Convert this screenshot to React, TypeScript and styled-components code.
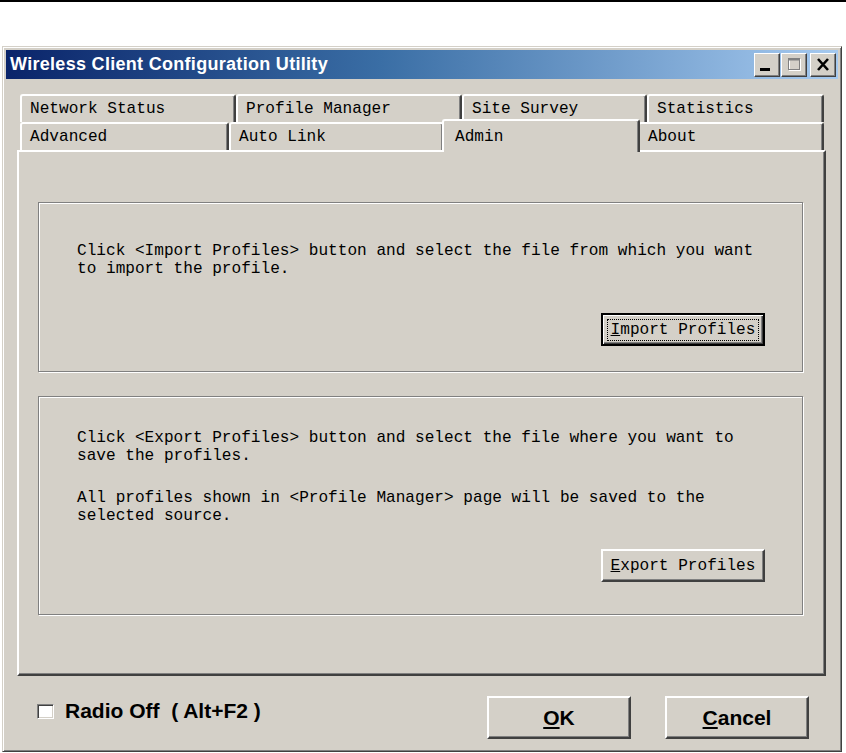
import React from "react";
import styled, { createGlobalStyle, css } from "styled-components";

const mono = `"Liberation Mono", "DejaVu Sans Mono", monospace`;
const sans = `"Liberation Sans", Arial, sans-serif`;

const GlobalStyle = createGlobalStyle`
  html, body { margin: 0; padding: 0; background: #ffffff; }
  #root { width: 846px; height: 753px; overflow: hidden; }
`;

const Page = styled.div`
  width: 846px;
  height: 753px;
  overflow: hidden;
  background: #ffffff;
`;

const TopRule = styled.div`
  height: 2px;
  background: #000;
`;

const Window = styled.div`
  margin: 44px 0 0 2px;
  width: 840px;
  box-sizing: border-box;
  background: #d4d0c8;
  border: 1px solid;
  border-color: #d4d0c8 #404040 #404040 #d4d0c8;
  box-shadow: inset 1px 1px 0 #ffffff, inset -1px -1px 0 #808080;
  padding: 3px;
  display: flex;
  flex-direction: column;
`;

const TitleBar = styled.div`
  height: 29px;
  display: flex;
  align-items: center;
  justify-content: space-between;
  background: linear-gradient(to right, #0a246a 0%, #3a6ea5 45%, #a6caf0 100%);
  padding: 0 2px 0 4px;
`;

const Title = styled.div`
  font-family: ${sans};
  font-weight: bold;
  font-size: 18px;
  letter-spacing: 0.3px;
  color: #ffffff;
  white-space: nowrap;
`;

const TitleButtons = styled.div`
  display: flex;
  align-items: center;
  gap: 1px;
`;

const TitleBtn = styled.div<{ $gap?: number }>`
  width: 26px;
  height: 24px;
  box-sizing: border-box;
  background: #d4d0c8;
  border: 1px solid;
  border-color: #ffffff #404040 #404040 #ffffff;
  box-shadow: inset -1px -1px 0 #808080;
  margin-left: ${(p) => p.$gap ?? 0}px;
  display: flex;
  align-items: center;
  justify-content: center;
`;

const Body = styled.div`
  padding: 15px 12px 9px 11px;
  display: flex;
  flex-direction: column;
`;

const TabStrip = styled.div`
  display: flex;
  flex-direction: column;
  margin: 0 2px 0 3px;
`;

const TabRow = styled.div`
  display: flex;
  align-items: flex-start;
  height: 28px;
`;

const Tab = styled.div<{ $w: number; $active?: boolean }>`
  flex: 0 0 ${(p) => p.$w}px;
  height: 28px;
  box-sizing: border-box;
  display: flex;
  align-items: center;
  padding-left: 8px;
  background: #d4d0c8;
  border-top: 2px solid #ffffff;
  border-left: 2px solid #ffffff;
  border-right: 2px solid #404040;
  border-radius: 3px 3px 0 0;
  box-shadow: inset -1px 0 0 #808080;
  font-family: ${mono};
  font-size: 16.1px;
  color: #000;
  white-space: nowrap;
  ${(p) =>
    p.$active &&
    css`
      flex-basis: ${p.$w + 4}px;
      height: 33px;
      margin: -3px -2px 0 -2px;
      padding-left: 11px;
      position: relative;
      z-index: 2;
    `}
`;

const Panel = styled.div`
  height: 526px;
  box-sizing: border-box;
  border: 2px solid;
  border-color: #ffffff #404040 #404040 #ffffff;
  box-shadow: inset -1px -1px 0 #808080;
  padding: 50px 21px 0 19px;
  display: flex;
  flex-direction: column;
  gap: 24px;
`;

const GroupBox = styled.div<{ $pt: number; $pb: number; $gap: number }>`
  border: 1px solid #808080;
  box-shadow: inset 1px 1px 0 #ffffff, 1px 1px 0 #ffffff;
  padding: ${(p) => p.$pt}px 37px ${(p) => p.$pb}px 38px;
  display: flex;
  flex-direction: column;
  gap: ${(p) => p.$gap}px;
`;

const Para = styled.p`
  margin: 0;
  font-family: ${mono};
  font-size: 16.1px;
  line-height: 18px;
  color: #000;
`;

const ActionButton = styled.div<{ $focused?: boolean }>`
  align-self: flex-end;
  width: 164px;
  height: 33px;
  box-sizing: border-box;
  display: flex;
  align-items: center;
  justify-content: center;
  background: #d4d0c8;
  font-family: ${mono};
  font-size: 16.1px;
  color: #000;
  white-space: nowrap;
  ${(p) =>
    p.$focused
      ? css`
          border: 2px solid #000;
          box-shadow: inset 1px 1px 0 #ffffff, inset -1px -1px 0 #404040, inset -2px -2px 0 #808080;
        `
      : css`
          border: 2px solid;
          border-color: #ffffff #404040 #404040 #ffffff;
          box-shadow: inset -1px -1px 0 #808080;
        `}
`;

const FocusRing = styled.span`
  outline: 1px dotted #000;
  outline-offset: 1px;
  padding: 0 2px;
  line-height: 18px;
`;

const Footer = styled.div`
  display: flex;
  align-items: flex-start;
  padding: 20px 17px 0 20px;
`;

const CheckLabel = styled.label`
  display: flex;
  align-items: center;
  gap: 11px;
  height: 22px;
  margin-top: 4px;
  font-family: ${sans};
  font-weight: bold;
  font-size: 21px;
  color: #000;
  white-space: pre;
`;

const CheckBox = styled.span`
  width: 17px;
  height: 15px;
  box-sizing: border-box;
  background: #ffffff;
  border: 1px solid;
  border-color: #808080 #ffffff #ffffff #808080;
  box-shadow: inset 1px 1px 0 #404040, inset -1px -1px 0 #d4d0c8;
`;

const DialogButton = styled.div<{ $first?: boolean }>`
  width: 144px;
  height: 43px;
  box-sizing: border-box;
  margin-left: ${(p) => (p.$first ? "auto" : "34px")};
  display: flex;
  align-items: center;
  justify-content: center;
  background: #d4d0c8;
  border: 2px solid;
  border-color: #ffffff #404040 #404040 #ffffff;
  box-shadow: inset -1px -1px 0 #808080;
  font-family: ${sans};
  font-weight: bold;
  font-size: 21px;
  color: #000;
`;

const MinIcon = () => (
  <svg width="24" height="22" viewBox="0 0 24 22">
    <rect x="5" y="14" width="10" height="3" fill="#000" />
  </svg>
);

const MaxIcon = () => (
  <svg width="24" height="22" viewBox="0 0 24 22">
    <rect x="7.5" y="5.5" width="11" height="11" fill="none" stroke="#ffffff" strokeWidth="1" />
    <rect x="6.5" y="4.5" width="11" height="11" fill="none" stroke="#808080" strokeWidth="1" />
    <rect x="6.5" y="4.5" width="11" height="2" fill="#808080" />
  </svg>
);

const CloseIcon = () => (
  <svg width="24" height="22" viewBox="0 0 24 22">
    <path d="M7 5 L17 16 M17 5 L7 16" stroke="#000" strokeWidth="2.6" fill="none" />
  </svg>
);

const row1 = [
  { label: "Network Status", w: 216 },
  { label: "Profile Manager", w: 226 },
  { label: "Site Survey", w: 185 },
  { label: "Statistics", w: 177 },
];

const row2 = [
  { label: "Advanced", w: 209 },
  { label: "Auto Link", w: 215 },
  { label: "Admin", w: 194, active: true },
  { label: "About", w: 186 },
];

export default function App() {
  return (
    <Page>
      <GlobalStyle />
      <TopRule />
      <Window>
        <TitleBar>
          <Title>Wireless Client Configuration Utility</Title>
          <TitleButtons>
            <TitleBtn>
              <MinIcon />
            </TitleBtn>
            <TitleBtn>
              <MaxIcon />
            </TitleBtn>
            <TitleBtn $gap={2}>
              <CloseIcon />
            </TitleBtn>
          </TitleButtons>
        </TitleBar>
        <Body>
          <TabStrip>
            <TabRow>
              {row1.map((t) => (
                <Tab key={t.label} $w={t.w}>
                  {t.label}
                </Tab>
              ))}
            </TabRow>
            <TabRow>
              {row2.map((t) => (
                <Tab key={t.label} $w={t.w} $active={t.active}>
                  {t.label}
                </Tab>
              ))}
            </TabRow>
          </TabStrip>
          <Panel>
            <GroupBox $pt={39} $pb={25} $gap={35}>
              <Para>
                Click &lt;Import Profiles&gt; button and select the file from which you want
                <br />
                to import the profile.
              </Para>
              <ActionButton $focused>
                <FocusRing>
                  <u>I</u>mport Profiles
                </FocusRing>
              </ActionButton>
            </GroupBox>
            <GroupBox $pt={32} $pb={32} $gap={24}>
              <Para>
                Click &lt;Export Profiles&gt; button and select the file where you want to
                <br />
                save the profiles.
              </Para>
              <Para>
                All profiles shown in &lt;Profile Manager&gt; page will be saved to the
                <br />
                selected source.
              </Para>
              <ActionButton>
                <span>
                  <u>E</u>xport Profiles
                </span>
              </ActionButton>
            </GroupBox>
          </Panel>
          <Footer>
            <CheckLabel>
              <CheckBox />
              {"Radio Off  ( Alt+F2 )"}
            </CheckLabel>
            <DialogButton $first>
              <span>
                <u>O</u>K
              </span>
            </DialogButton>
            <DialogButton>
              <span>
                <u>C</u>ancel
              </span>
            </DialogButton>
          </Footer>
        </Body>
      </Window>
    </Page>
  );
}
